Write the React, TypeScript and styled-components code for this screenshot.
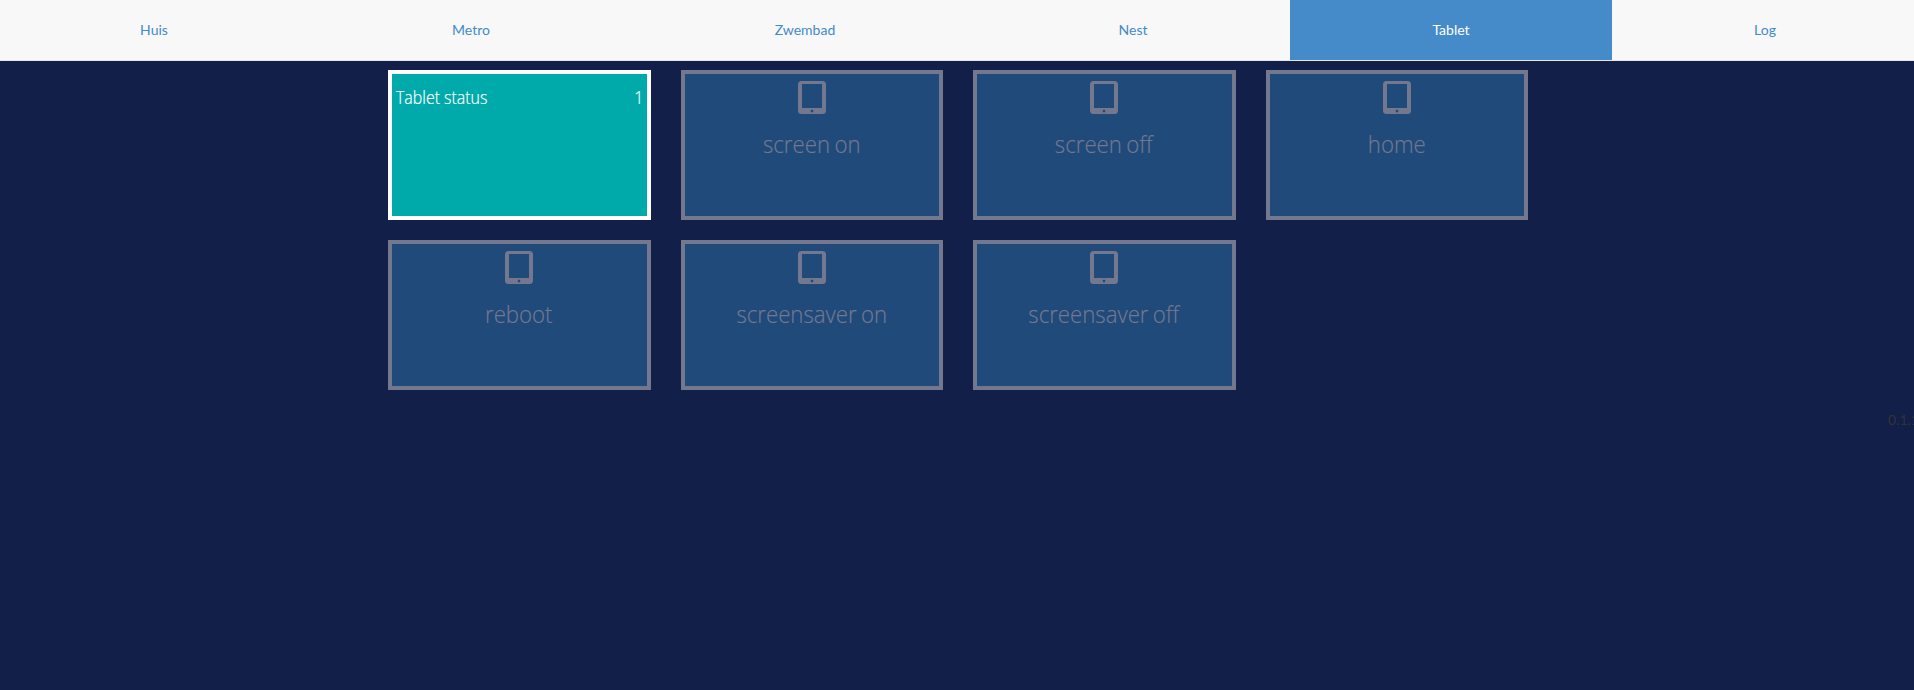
import React from 'react';
import styled, { createGlobalStyle } from 'styled-components';

const GlobalStyle = createGlobalStyle`
  *, *::before, *::after { box-sizing: border-box; }
  html { background: #121f48; overflow: hidden; }
  body {
    margin: 0;
    overflow: hidden;
    font: 14px/20px Lato, 'Open Sans', sans-serif;
    color: #333;
    background: #121f48;
  }
`;

const Page = styled.div`
  width: 1916px;
  min-height: 690px;
`;

const Nav = styled.nav`
  display: flex;
  height: 61px;
  background: #f8f8f8;
  border-bottom: 1px solid #e7e7e7;
`;

const NavItem = styled.a<{ $width: number; $active?: boolean }>`
  flex: 0 0 ${p => p.$width}px;
  display: flex;
  align-items: center;
  justify-content: center;
  height: 60px;
  color: ${p => (p.$active ? '#fff' : '#428bca')};
  background: ${p => (p.$active ? '#458bc9' : 'transparent')};
  text-decoration: none;
`;

const Grid = styled.main`
  display: grid;
  grid-template-columns: repeat(4, 262.5px);
  grid-auto-rows: 150px;
  gap: 20px 30px;
  width: 1140px;
  margin: 9px auto 0;
`;

const Tile = styled.section<{ $on?: boolean }>`
  border: 4px solid ${p => (p.$on ? '#fff' : '#73788f')};
  background: ${p => (p.$on ? '#00aaaa' : '#1f4a7a')};
  color: ${p => (p.$on ? '#fff' : '#73788f')};
  font-family: 'Open Sans', sans-serif;
  font-weight: 300;
  text-align: center;
  -webkit-text-stroke: 0.2px currentColor;
`;

const StatusLine = styled.div`
  display: flex;
  justify-content: space-between;
  padding: 12px 3px 0 4px;
  font-size: 18px;
  line-height: 22px;
`;

const StatusText = styled.span<{ $side: 'left' | 'right' }>`
  transform: scaleX(0.885);
  transform-origin: ${p => p.$side} center;
`;

const TabletGlyph = styled.svg`
  display: block;
  width: 28px;
  height: 33px;
  margin: 7px auto 0;
`;

const Label = styled.div`
  margin-top: 13px;
  font-size: 24px;
  line-height: 34px;
  word-spacing: -1.5px;
  transform: translateX(-0.5px) scaleX(0.925);
`;

const Version = styled.footer`
  margin-top: 20px;
  padding-left: 1888px;
  white-space: nowrap;
`;

const links = [
  { name: 'Huis', width: 308 },
  { name: 'Metro', width: 326 },
  { name: 'Zwembad', width: 342 },
  { name: 'Nest', width: 314 },
  { name: 'Tablet', width: 322 },
  { name: 'Log', width: 306 },
];

const actions = ['screen on', 'screen off', 'home', 'reboot', 'screensaver on', 'screensaver off'];

const TabletIcon = () => (
  <TabletGlyph viewBox="0 0 28 33" fill="currentColor" aria-hidden>
    <path
      fillRule="evenodd"
      d="M3.500 0h21A3.500 3.500 0 0 1 28 3.500v26a3.500 3.500 0 0 1-3.500 3.500h-21A3.500 3.500 0 0 1 0 29.500v-26A3.500 3.500 0 0 1 3.500 0zM4 3v24h20V3zM13.300 28.800h1.400a.500.500 0 0 1 .500.500v1.400a.500.500 0 0 1-.500.500h-1.400a.500.500 0 0 1-.500-.500v-1.400a.500.500 0 0 1 .500-.500z"
    />
  </TabletGlyph>
);

export default function App() {
  return (
    <>
      <GlobalStyle />
      <Page>
        <Nav>
          {links.map(l => (
            <NavItem key={l.name} $width={l.width} $active={l.name === 'Tablet'}>
              {l.name}
            </NavItem>
          ))}
        </Nav>
        <Grid>
          <Tile $on>
            <StatusLine>
              <StatusText $side="left">Tablet status</StatusText>
              <StatusText $side="right">1</StatusText>
            </StatusLine>
          </Tile>
          {actions.map(name => (
            <Tile key={name}>
              <TabletIcon />
              <Label>{name}</Label>
            </Tile>
          ))}
        </Grid>
        <Version>0.1.1</Version>
      </Page>
    </>
  );
}
